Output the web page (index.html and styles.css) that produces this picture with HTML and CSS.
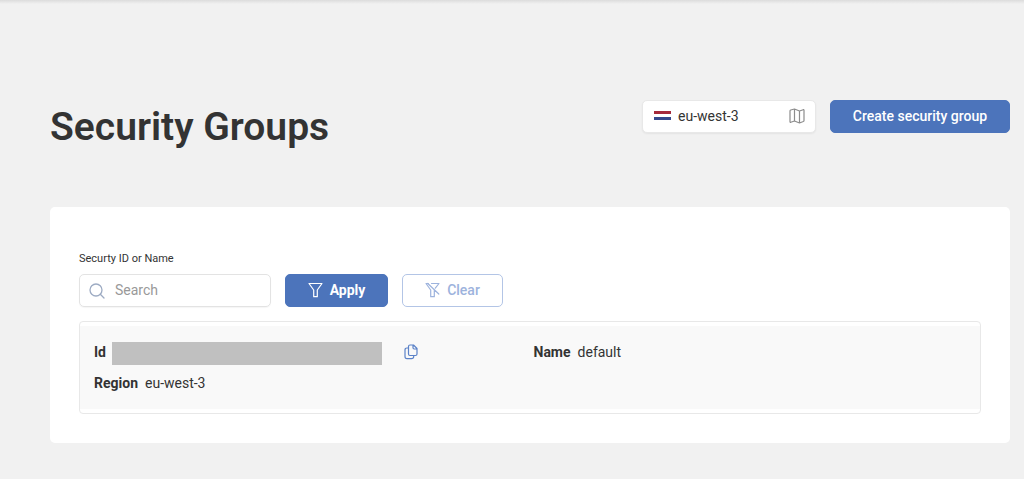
FILE: index.html
```html
<!DOCTYPE html>
<html lang="en">
<head>
    <meta charset="UTF-8">
    <meta name="viewport" content="width=device-width, initial-scale=1.0">
    <title>Security Groups</title>
    <link rel="stylesheet" href="styles.css">
</head>
<body>
    <div class="topbar-shadow"></div>
    <main class="page">
        <header class="page-header">
            <h1>Security Groups</h1>
            <div class="header-actions">
                <button type="button" class="region-select">
                    <svg class="flag" width="17" height="12" viewBox="0 0 17 12">
                        <rect width="17" height="12" fill="#fff"/>
                        <rect y="1" width="17" height="3" fill="#a52a3c"/>
                        <rect y="7" width="17" height="3" fill="#34488c"/>
                    </svg>
                    <span class="region-name">eu-west-3</span>
                    <svg class="map-icon" width="16" height="16" viewBox="0 0 16 16" fill="none" stroke="#8c8c8c" stroke-width="1.2" stroke-linejoin="round">
                        <path d="M1 3 Q1 2.2 1.7 2 L5.5 1 L10.5 3 L14.2 1.7 Q15 1.5 15 2.3 V12.5 Q15 13.2 14.3 13.5 L10.5 15 L5.5 13 L1.8 14.3 Q1 14.5 1 13.7 Z M5.5 1 V13 M10.5 3 V15"/>
                    </svg>
                </button>
                <button type="button" class="btn btn-create">Create security group</button>
            </div>
        </header>

        <section class="card">
            <form class="filters">
                <label for="search">Securty ID or Name</label>
                <div class="filter-row">
                    <div class="search-box">
                        <svg width="16" height="16" viewBox="0 0 16 16" fill="none" stroke="#9dabc3" stroke-width="1.3" stroke-linecap="round">
                            <circle cx="7" cy="7" r="6"/>
                            <path d="M11.3 11.3 L15 15"/>
                        </svg>
                        <input type="text" id="search" placeholder="Search">
                    </div>
                    <button type="button" class="btn btn-apply">
                        <svg width="15" height="16" viewBox="0 0 15 16" fill="none" stroke="currentColor" stroke-width="1.2" stroke-linejoin="round">
                            <path d="M1 1.5 H14 L9.3 8 V14.7 H5.7 V8 Z"/>
                        </svg>
                        Apply
                    </button>
                    <button type="button" class="btn btn-clear">
                        <svg width="15" height="16" viewBox="0 0 15 16" fill="none" stroke="currentColor" stroke-width="1.2" stroke-linejoin="round" stroke-linecap="round">
                            <path d="M3.5 1.5 H1 L5.7 8 V14.7 H9.3 V8.3 M6.5 1.5 H14 L10.3 6.2 M2.8 1.5 L13.8 12"/>
                        </svg>
                        Clear
                    </button>
                </div>
            </form>

            <div class="group-list">
                <div class="group-item">
                    <div class="field">
                        <strong>Id</strong>
                        <span class="redacted"></span>
                        <button type="button" class="copy-btn" aria-label="Copy">
                            <svg width="14" height="16" viewBox="0 0 14 16" fill="none" stroke="#5b82c8" stroke-width="1.2" stroke-linejoin="round">
                                <path d="M6 1 H9.5 L13 4.5 V10 Q13 11.5 11.5 11.5 H6 Q4.5 11.5 4.5 10 V2.5 Q4.5 1 6 1 Z M9 1 V3.8 Q9 5 10.2 5 H13"/>
                                <path d="M4.5 4 H3 Q1 4 1 6 V12.5 Q1 14.7 3 14.7 H7.5 Q9.7 14.7 9.7 12.5 V11.5"/>
                            </svg>
                        </button>
                    </div>
                    <div class="field">
                        <strong>Name</strong>
                        <span>default</span>
                    </div>
                    <div class="field">
                        <strong>Region</strong>
                        <span>eu-west-3</span>
                    </div>
                </div>
            </div>
        </section>
    </main>
</body>
</html>
```
FILE: styles.css
```css
* {
    box-sizing: border-box;
}
body {
    margin: 0;
    background: #f1f1f1;
    color: #333;
    font-family: Roboto, sans-serif;
    font-size: 14px;
    line-height: 20px;
}
button, input {
    font-family: inherit;
    font-size: 14px;
    line-height: 20px;
}
.topbar-shadow {
    height: 4px;
    background: linear-gradient(#dcdcdc, #f1f1f1);
}
.page {
    padding: 96px 14px 36px 50px;
}
.page-header {
    display: flex;
    justify-content: space-between;
    align-items: flex-start;
    margin-bottom: 53px;
}
h1 {
    margin: 0;
    font-size: 39px;
    font-weight: 600;
    line-height: 54px;
}
.header-actions {
    display: flex;
    gap: 14px;
}
.region-select {
    display: flex;
    align-items: center;
    width: 174px;
    height: 33px;
    padding: 0 10px 2px 11px;
    border: 1px solid #e8e8e8;
    border-radius: 5px;
    background: #fff;
    color: #333;
    box-shadow: 0 1px 2px rgba(0, 0, 0, 0.06);
    cursor: pointer;
}
.region-name {
    margin: 0 auto 0 7px;
}
.btn {
    display: flex;
    align-items: center;
    justify-content: center;
    gap: 7px;
    height: 33px;
    padding: 0 0 2px;
    border: 1px solid #4c74bb;
    border-radius: 5px;
    background: #4c74bb;
    color: #fff;
    font-weight: 500;
    cursor: pointer;
}
.btn-create {
    width: 180px;
}
.card {
    padding: 43px 29px 29px;
    border-radius: 5px;
    background: #fff;
}
.filters label {
    display: block;
    margin-bottom: 6px;
    font-size: 11px;
    line-height: 18px;
}
.filter-row {
    display: flex;
    gap: 14px;
}
.search-box {
    display: flex;
    align-items: center;
    gap: 10px;
    width: 192px;
    height: 33px;
    padding: 0 9px;
    border: 1px solid #e3e3e3;
    border-radius: 5px;
    box-shadow: 0 1px 1px rgba(0, 0, 0, 0.04);
}
.search-box svg {
    flex: none;
}
.search-box input {
    width: 100%;
    padding: 0 0 2px;
    border: 0;
    outline: 0;
    background: none;
}
.search-box input::placeholder {
    color: #999;
}
.btn-apply {
    width: 103px;
    font-weight: 700;
}
.btn-clear {
    width: 101px;
    border-color: #b3c5e6;
    background: #fff;
    color: #9db3dd;
}
.group-list {
    margin-top: 14px;
    padding: 4px 0;
    border: 1px solid #e8e8e8;
    border-radius: 4px;
}
.group-item {
    display: grid;
    grid-template-columns: 1fr 1fr;
    row-gap: 8px;
    padding: 16px 7px 16px 14px;
    background: #f9f9f9;
}
.field {
    display: flex;
    align-items: flex-start;
    gap: 7px;
}
.redacted {
    width: 270px;
    height: 23px;
    margin-left: -1px;
    background: #c0c0c0;
}
.copy-btn {
    height: 20px;
    margin-left: 15px;
    padding: 2px 0;
    border: 0;
    background: none;
    line-height: 0;
    cursor: pointer;
}
```
